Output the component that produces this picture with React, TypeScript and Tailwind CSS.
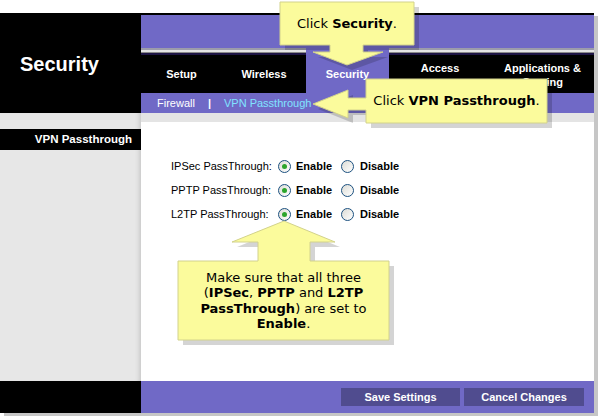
import type { ReactNode } from 'react';

const PURPLE = 'bg-[#7069c6]';

type NavItem = { label: ReactNode; active?: boolean; top?: boolean; width: string };

const navItems: NavItem[] = [
  { label: 'Setup', width: 'w-[81px]' },
  { label: 'Wireless', width: 'w-[84px]' },
  { label: 'Security', width: 'w-[83px]', active: true },
  { label: 'Access', width: 'w-[102px]', top: true },
  { label: <>Applications &amp;<br />Gaming</>, width: 'flex-1', top: true },
];

const rows = ['IPSec PassThrough:', 'PPTP PassThrough:', 'L2TP PassThrough:'];

function Radio({ checked }: { checked?: boolean }) {
  return (
    <span className="flex h-[13px] w-[13px] items-center justify-center rounded-full border border-[#1c5180] bg-gradient-to-br from-[#dcdcd6] to-white">
      {checked && <span className="h-[5px] w-[5px] rounded-full bg-[#2ca52c]" />}
    </span>
  );
}

function NavColumn({ item }: { item: NavItem }) {
  if (item.active) {
    return (
      <div className={`${item.width} flex flex-col ${PURPLE}`}>
        <div className="h-[7px]" />
        <div className="flex h-[38px] items-center justify-center text-center text-[11px] font-bold leading-[14px] text-white">
          {item.label}
        </div>
      </div>
    );
  }
  return (
    <div className={`${item.width} flex flex-col`}>
      <div className="h-[2px] bg-[#9c9cab]" />
      <div className="h-[2px] bg-[#e4e4e4]" />
      <div className="h-[1px] bg-[#8a8a8a]" />
      <div className="h-[2px] bg-[#1d1444]" />
      <div
        className={`flex h-[38px] justify-center bg-black text-center text-[11px] font-bold leading-[14px] text-white ${
          item.top ? 'items-start pt-[6px]' : 'items-center'
        }`}
      >
        {item.label}
      </div>
    </div>
  );
}

function Callouts() {
  const fill = '#fbfb9c';
  const stroke = '#d2d28c';
  const c1 = '280,2 414,2 414,45 363,45 363,52 383,52 347,65 313,52 330,52 330,45 280,45';
  const c2 = '366,79 547,79 547,123 366,123 366,110 348,110 348,118 313,104 348,90 348,98 366,98';
  const c3 = '284,221 335,242 310,242 310,261 389,261 389,340 178,340 178,261 258,261 258,242 232,242';
  return (
    <>
      <svg className="pointer-events-none absolute left-0 top-0" width="599" height="417">
        {[c1, c2, c3].map((p) => (
          <polygon key={p + 's'} points={p} transform="translate(5,5)" fill="#000" fillOpacity={0.17} />
        ))}
        {[c1, c2, c3].map((p) => (
          <polygon key={p} points={p} fill={fill} stroke={stroke} strokeWidth={1} />
        ))}
      </svg>
      <div className="absolute left-[280px] top-[2px] flex h-[43px] w-[134px] items-center justify-center text-[13px] text-black">
        Click&nbsp;<b>Security</b>.
      </div>
      <div className="absolute left-[366px] top-[79px] flex h-[44px] w-[181px] items-center justify-center text-[13px] text-black">
        Click&nbsp;<b>VPN Passthrough</b>.
      </div>
      <div className="absolute left-[178px] top-[261px] flex h-[79px] w-[211px] items-center justify-center text-center text-[13px] leading-[15.5px] text-black">
        <p>
          Make sure that all three
          <br />(<b>IPSec</b>, <b>PPTP</b> and <b>L2TP</b>
          <br /><b>PassThrough</b>) are set to
          <br /><b>Enable</b>.
        </p>
      </div>
    </>
  );
}

export default function App() {
  return (
    <div
      className="relative h-[417px] w-[599px] overflow-hidden bg-white"
      style={{ fontFamily: '"Liberation Sans", Arial, sans-serif' }}
    >
      <div className="mt-[13px] flex h-[400px] w-[594px] flex-col shadow-[4px_3px_0_#c6c6c6]">
        {/* header */}
        <div className="flex h-[100px]">
          <div className="flex w-[141px] items-center bg-black pl-[20px] pt-[2px] text-[20px] font-bold text-white">
            Security
          </div>
          <div className="flex flex-1 flex-col">
            <div className="h-[2px] bg-black" />
            <div className={`h-[33px] ${PURPLE}`} />
            <div className="flex h-[45px]">
              {navItems.map((item, i) => (
                <NavColumn key={i} item={item} />
              ))}
            </div>
            <div className={`flex h-[20px] items-center pl-[16px] text-[11px] text-white ${PURPLE}`}>
              <span>Firewall</span>
              <span className="mx-[13px] font-bold">|</span>
              <span className="text-[#80e4ff]">VPN Passthrough</span>
            </div>
          </div>
        </div>

        {/* body */}
        <div className="flex flex-1">
          <div className="w-[141px] bg-[#e7e7e7] shadow-[inset_-5px_0_4px_-3px_#c9c9c9]">
            <div className="mt-[16px] flex h-[21px] items-center justify-end bg-black pr-[9px] text-[11.5px] font-bold text-white">
              VPN Passthrough
            </div>
          </div>
          <div className="flex flex-1 flex-col">
            <div className="h-[9px] bg-[#e4e4e4]" />
            <div className="flex-1 bg-white pl-[30px] pt-[32px]">
              {rows.map((label) => (
                <div key={label} className="flex h-[24px] items-center text-[11px] text-black">
                  <span className="w-[107px]">{label}</span>
                  <Radio checked />
                  <span className="ml-[5px] w-[45px] font-bold">Enable</span>
                  <Radio />
                  <span className="ml-[6px] font-bold">Disable</span>
                </div>
              ))}
            </div>
          </div>
        </div>

        {/* footer */}
        <div className="flex h-[32px]">
          <div className="w-[141px] bg-black" />
          <div className={`flex flex-1 items-center justify-end gap-[4px] pr-[10px] ${PURPLE}`}>
            <button className="h-[18px] w-[119px] bg-[#504c8f] text-[11px] font-bold text-white">Save Settings</button>
            <button className="h-[18px] w-[120px] bg-[#504c8f] text-[11px] font-bold text-white">Cancel Changes</button>
          </div>
        </div>
      </div>
      <div style={{ fontFamily: '"DejaVu Sans", Verdana, sans-serif' }}>
        <Callouts />
      </div>
    </div>
  );
}
